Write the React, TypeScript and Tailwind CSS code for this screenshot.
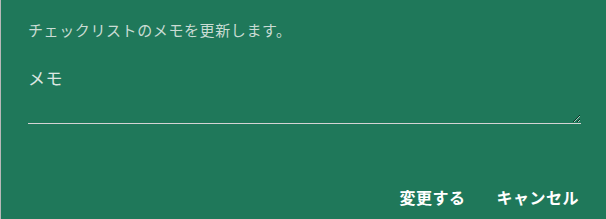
import { useState } from "react";

const jp = { fontFamily: '"Noto Sans CJK JP", "Noto Sans", sans-serif' };

export default function App() {
    const [memo, setMemo] = useState("");

    return (
        <div className="w-[606px] h-[219px] bg-[#1f785a] border-l border-[#b8b8b8] flex flex-col" style={jp}>
            <div className="pl-[27px] pr-[25px] pt-[19px] flex flex-col">
                <p className="text-[15px] leading-[22px] tracking-[0.6px] text-[#c9dcd4]">チェックリストのメモを更新します。</p>

                {/* memo field */}
                <label className="mt-[25px] text-[17px] leading-[24px] tracking-[0.5px] text-[#dce6e1]">メモ</label>
                <textarea
                    value={memo}
                    onChange={(e) => setMemo(e.target.value)}
                    className="mt-[6px] h-[28px] w-full bg-transparent border-0 border-b border-[#d4d4d4] outline-none text-white text-sm"
                />
            </div>

            {/* Actions */}
            <div className="mt-auto flex justify-end items-center gap-[31px] pr-[27px] pb-[11px]">
                <button className="text-[16px] leading-[22px] tracking-[0.5px] font-bold text-white">変更する</button>
                <button className="text-[16px] leading-[22px] tracking-[0.5px] font-bold text-white">キャンセル</button>
            </div>
        </div>
    );
}
